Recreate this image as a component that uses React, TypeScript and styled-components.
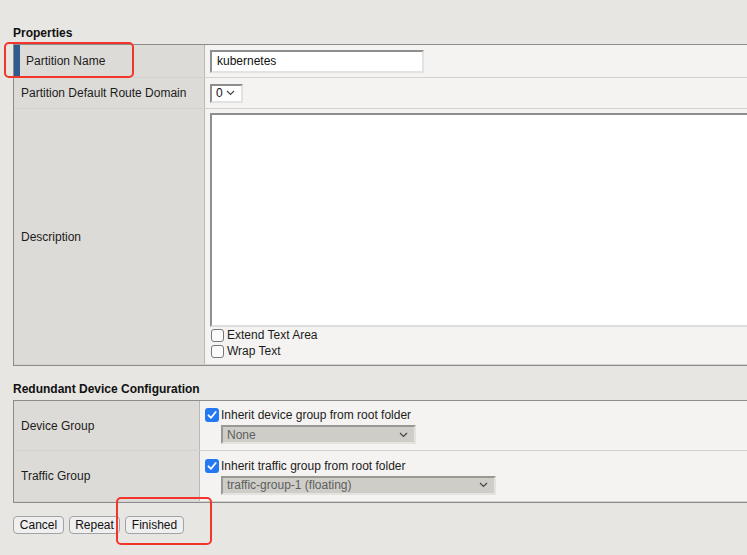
import React from 'react';
import styled, { createGlobalStyle } from 'styled-components';

const Global = createGlobalStyle`
  html, body { margin: 0; padding: 0; background: #e7e6e2; overflow: hidden; }
  body { font-family: "Liberation Sans", Arial, sans-serif; font-size: 12px; color: #1c1c1c; }
  * { box-sizing: border-box; }
`;

const Page = styled.div`
  position: relative;
  width: 747px;
  height: 555px;
  overflow: hidden;
  padding: 25px 0 0 13px;
`;

const SectionTitle = styled.div<{ $mt?: number }>`
  font-weight: bold;
  font-size: 12px;
  line-height: 16px;
  margin-top: ${p => p.$mt ?? 0}px;
  margin-bottom: 3px;
  color: #111;
`;

const Table = styled.div`
  display: flex;
  flex-direction: column;
  margin-right: -20px;
  border-top: 1px solid #8c8c8c;
  border-bottom: 1px solid #8c8c8c;
  border-left: 1px solid #8c8c8c;
`;

const Row = styled.div<{ $label: number; $h: number }>`
  display: grid;
  grid-template-columns: ${p => p.$label}px 1fr;
  height: ${p => p.$h}px;
  border-bottom: 1px solid #d3d2ce;
`;

const LabelCell = styled.div<{ $marked?: boolean }>`
  background: #dcdbd7;
  border-right: 1px solid #b9b8b4;
  display: flex;
  align-items: center;
  padding-left: ${p => (p.$marked ? 6 : 7)}px;
  border-left: ${p => (p.$marked ? '6px solid #2f5b8e' : 'none')};
  font-size: 12px;
  color: #1c1c1c;
`;

const ValueCell = styled.div<{ $top?: boolean }>`
  background: #f4f3f1;
  display: flex;
  flex-direction: column;
  justify-content: ${p => (p.$top ? 'flex-start' : 'center')};
  align-items: flex-start;
  min-width: 0;
  overflow: hidden;
  padding: ${p => (p.$top ? '4px 0 0 5px' : '0 0 0 5px')};
`;

const TextInput = styled.input`
  width: 214px;
  height: 23px;
  border-top: 2px solid #8e8e8e;
  border-left: 2px solid #8e8e8e;
  border-right: 2px solid #e2e2e2;
  border-bottom: 2px solid #e2e2e2;
  background: #fff;
  padding: 0 5px;
  font-family: "Liberation Sans", Arial, sans-serif;
  font-size: 12px;
  color: #111;
  outline: none;
`;

const SelectBox = styled.div<{ $w: number; $disabled?: boolean }>`
  width: ${p => p.$w}px;
  height: 19px;
  display: flex;
  align-items: center;
  justify-content: space-between;
  padding: 0 6px 0 4px;
  background: ${p => (p.$disabled ? '#cfcdc7' : '#fff')};
  color: ${p => (p.$disabled ? '#5e5e5e' : '#111')};
  border-top: 2px solid ${p => (p.$disabled ? '#9a9895' : '#8e8e8e')};
  border-left: 2px solid ${p => (p.$disabled ? '#9a9895' : '#8e8e8e')};
  border-right: 2px solid ${p => (p.$disabled ? '#e4e3df' : '#e2e2e2')};
  border-bottom: 2px solid ${p => (p.$disabled ? '#e4e3df' : '#e2e2e2')};
  font-size: 12px;
`;

const IndentedSelect = styled(SelectBox)`
  margin-left: 16px;
  margin-top: 2px;
`;

const TextArea = styled.textarea`
  width: 100%;
  height: 214px;
  resize: none;
  background: #fff;
  border-top: 2px solid #8e8e8e;
  border-left: 2px solid #8e8e8e;
  border-right: 2px solid #e0e0e0;
  border-bottom: 2px solid #dedede;
  outline: none;
  margin: 0;
  display: block;
`;

const CheckLine = styled.label<{ $gap: number }>`
  display: flex;
  align-items: center;
  gap: ${p => p.$gap}px;
  height: 16px;
  font-size: 12px;
  color: #1c1c1c;
  white-space: nowrap;
`;

const Box = styled.span<{ $checked?: boolean }>`
  width: ${p => (p.$checked ? 14 : 13)}px;
  height: ${p => (p.$checked ? 14 : 13)}px;
  margin-left: ${p => (p.$checked ? 0 : 1)}px;
  border-radius: 3px;
  display: inline-flex;
  align-items: center;
  justify-content: center;
  background: ${p => (p.$checked ? '#2478f2' : '#fbfbfb')};
  border: ${p => (p.$checked ? 'none' : '1px solid #77767f')};
  flex: none;
`;

const Buttons = styled.div`
  display: flex;
  gap: 5px;
  margin-top: 13px;
`;

const Button = styled.button<{ $w: number }>`
  width: ${p => p.$w}px;
  height: 18px;
  padding: 0;
  border: 1px solid #a3a3a6;
  border-radius: 4px;
  background: #efefef;
  font-family: "Liberation Sans", Arial, sans-serif;
  font-size: 12px;
  color: #111;
  line-height: 16px;
`;

const Annotation = styled.div<{ $x: number; $y: number; $w: number; $h: number }>`
  position: absolute;
  left: ${p => p.$x}px;
  top: ${p => p.$y}px;
  width: ${p => p.$w}px;
  height: ${p => p.$h}px;
  border: 2px solid #f2352b;
  border-radius: 5px;
  pointer-events: none;
`;

const Chevron = () => (
  <svg width="9" height="6" viewBox="0 0 9 6">
    <polyline points="1,1 4.5,4.5 8,1" fill="none" stroke="#444" strokeWidth="1.2" />
  </svg>
);

const Tick = () => (
  <svg width="12" height="12" viewBox="0 0 12 12">
    <polyline points="2.5,6.3 5,8.8 9.7,3" fill="none" stroke="#fff" strokeWidth="1.8" strokeLinecap="round" strokeLinejoin="round" />
  </svg>
);

export default function App() {
  return (
    <>
      <Global />
      <Page>
        <SectionTitle>Properties</SectionTitle>
        <Table>
          <Row $label={191} $h={33}>
            <LabelCell $marked>Partition Name</LabelCell>
            <ValueCell>
              <TextInput defaultValue="kubernetes" />
            </ValueCell>
          </Row>
          <Row $label={191} $h={31}>
            <LabelCell>Partition Default Route Domain</LabelCell>
            <ValueCell>
              <SelectBox $w={33}>
                <span>0</span>
                <Chevron />
              </SelectBox>
            </ValueCell>
          </Row>
          <Row $label={191} $h={256}>
            <LabelCell>Description</LabelCell>
            <ValueCell $top>
              <TextArea />
              <CheckLine $gap={3}>
                <Box />
                Extend Text Area
              </CheckLine>
              <CheckLine $gap={3}>
                <Box />
                Wrap Text
              </CheckLine>
            </ValueCell>
          </Row>
        </Table>

        <SectionTitle $mt={15}>Redundant Device Configuration</SectionTitle>
        <Table>
          <Row $label={186} $h={50}>
            <LabelCell>Device Group</LabelCell>
            <ValueCell>
              <CheckLine $gap={2}>
                <Box $checked>
                  <Tick />
                </Box>
                Inherit device group from root folder
              </CheckLine>
              <IndentedSelect $w={195} $disabled>
                <span>None</span>
                <Chevron />
              </IndentedSelect>
            </ValueCell>
          </Row>
          <Row $label={186} $h={51}>
            <LabelCell>Traffic Group</LabelCell>
            <ValueCell>
              <CheckLine $gap={2}>
                <Box $checked>
                  <Tick />
                </Box>
                Inherit traffic group from root folder
              </CheckLine>
              <IndentedSelect $w={275} $disabled>
                <span>traffic-group-1 (floating)</span>
                <Chevron />
              </IndentedSelect>
            </ValueCell>
          </Row>
        </Table>

        <Buttons>
          <Button $w={51}>Cancel</Button>
          <Button $w={51}>Repeat</Button>
          <Button $w={59}>Finished</Button>
        </Buttons>

        <Annotation $x={4} $y={42} $w={130} $h={36} />
        <Annotation $x={116} $y={497} $w={96} $h={48} />
      </Page>
    </>
  );
}
